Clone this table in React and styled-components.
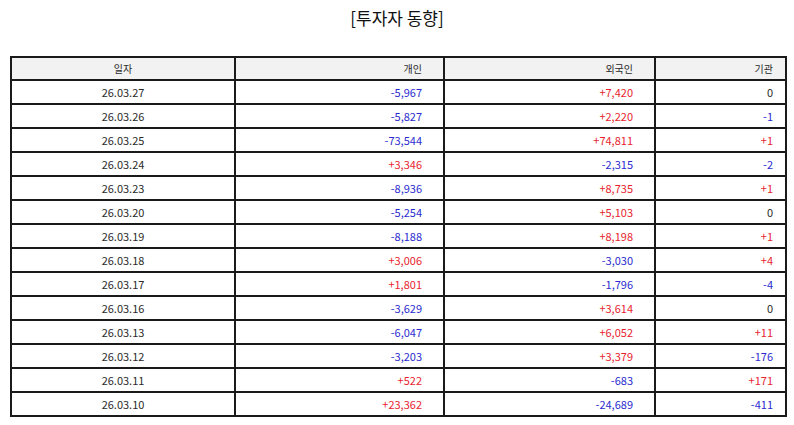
import React from "react";
import styled, { createGlobalStyle } from "styled-components";

const GlobalStyle = createGlobalStyle`
  body {
    margin: 0;
    background: #fff;
    font-family: "Noto Sans CJK KR", "Noto Sans", sans-serif;
  }
`;

const Wrapper = styled.div`
  width: 794px;
  padding: 0 10px;
  box-sizing: border-box;
`;

const Title = styled.h2`
  margin: 0;
  padding-top: 5px;
  height: 56px;
  box-sizing: border-box;
  text-align: center;
  font-size: 17px;
  font-weight: 400;
  color: #111;
`;

const Table = styled.table`
  width: 775px;
  border-collapse: collapse;
  table-layout: fixed;
  font-size: 11px;
  color: #2a2a2a;

  th,
  td {
    border: 2px solid #1a1a1a;
    height: 24px;
    padding: 0 20px 0 4px;
    box-sizing: border-box;
  }

  th {
    height: 23px;
    background: #f2f2f2;
    font-weight: 400;
    font-size: 10px;
  }
`;

const Cell = styled.td`
  text-align: ${(p) => p.align || "right"};
  padding-right: ${(p) => (p.$pad != null ? p.$pad : 21)}px !important;
  color: ${(p) => (p.$tone === "up" ? "#e8232f" : p.$tone === "down" ? "#2b2bd0" : "#2a2a2a")};
`;

const Head = styled.th`
  text-align: ${(p) => p.align || "right"};
  padding-right: ${(p) => (p.$pad != null ? p.$pad : 21)}px !important;
`;

const rows = [
  ["26.03.27", "-5,967", "+7,420", "0"],
  ["26.03.26", "-5,827", "+2,220", "-1"],
  ["26.03.25", "-73,544", "+74,811", "+1"],
  ["26.03.24", "+3,346", "-2,315", "-2"],
  ["26.03.23", "-8,936", "+8,735", "+1"],
  ["26.03.20", "-5,254", "+5,103", "0"],
  ["26.03.19", "-8,188", "+8,198", "+1"],
  ["26.03.18", "+3,006", "-3,030", "+4"],
  ["26.03.17", "+1,801", "-1,796", "-4"],
  ["26.03.16", "-3,629", "+3,614", "0"],
  ["26.03.13", "-6,047", "+6,052", "+11"],
  ["26.03.12", "-3,203", "+3,379", "-176"],
  ["26.03.11", "+522", "-683", "+171"],
  ["26.03.10", "+23,362", "-24,689", "-411"],
];

const tone = (v) => (v.startsWith("+") ? "up" : v.startsWith("-") ? "down" : "flat");

export default function App() {
  return (
    <>
      <GlobalStyle />
      <Wrapper>
        <Title>[투자자 동향]</Title>
        <Table>
          <colgroup>
            <col style={{ width: 224 }} />
            <col style={{ width: 209 }} />
            <col style={{ width: 211 }} />
            <col style={{ width: 131 }} />
          </colgroup>
          <thead>
            <tr>
              <Head align="center" $pad={4}>일자</Head>
              <Head>개인</Head>
              <Head>외국인</Head>
              <Head $pad={12}>기관</Head>
            </tr>
          </thead>
          <tbody>
            {rows.map(([date, ind, frn, inst]) => (
              <tr key={date}>
                <Cell align="center" $pad={4}>{date}</Cell>
                <Cell $tone={tone(ind)}>{ind}</Cell>
                <Cell $tone={tone(frn)}>{frn}</Cell>
                <Cell $tone={tone(inst)} $pad={12}>{inst}</Cell>
              </tr>
            ))}
          </tbody>
        </Table>
      </Wrapper>
    </>
  );
}
